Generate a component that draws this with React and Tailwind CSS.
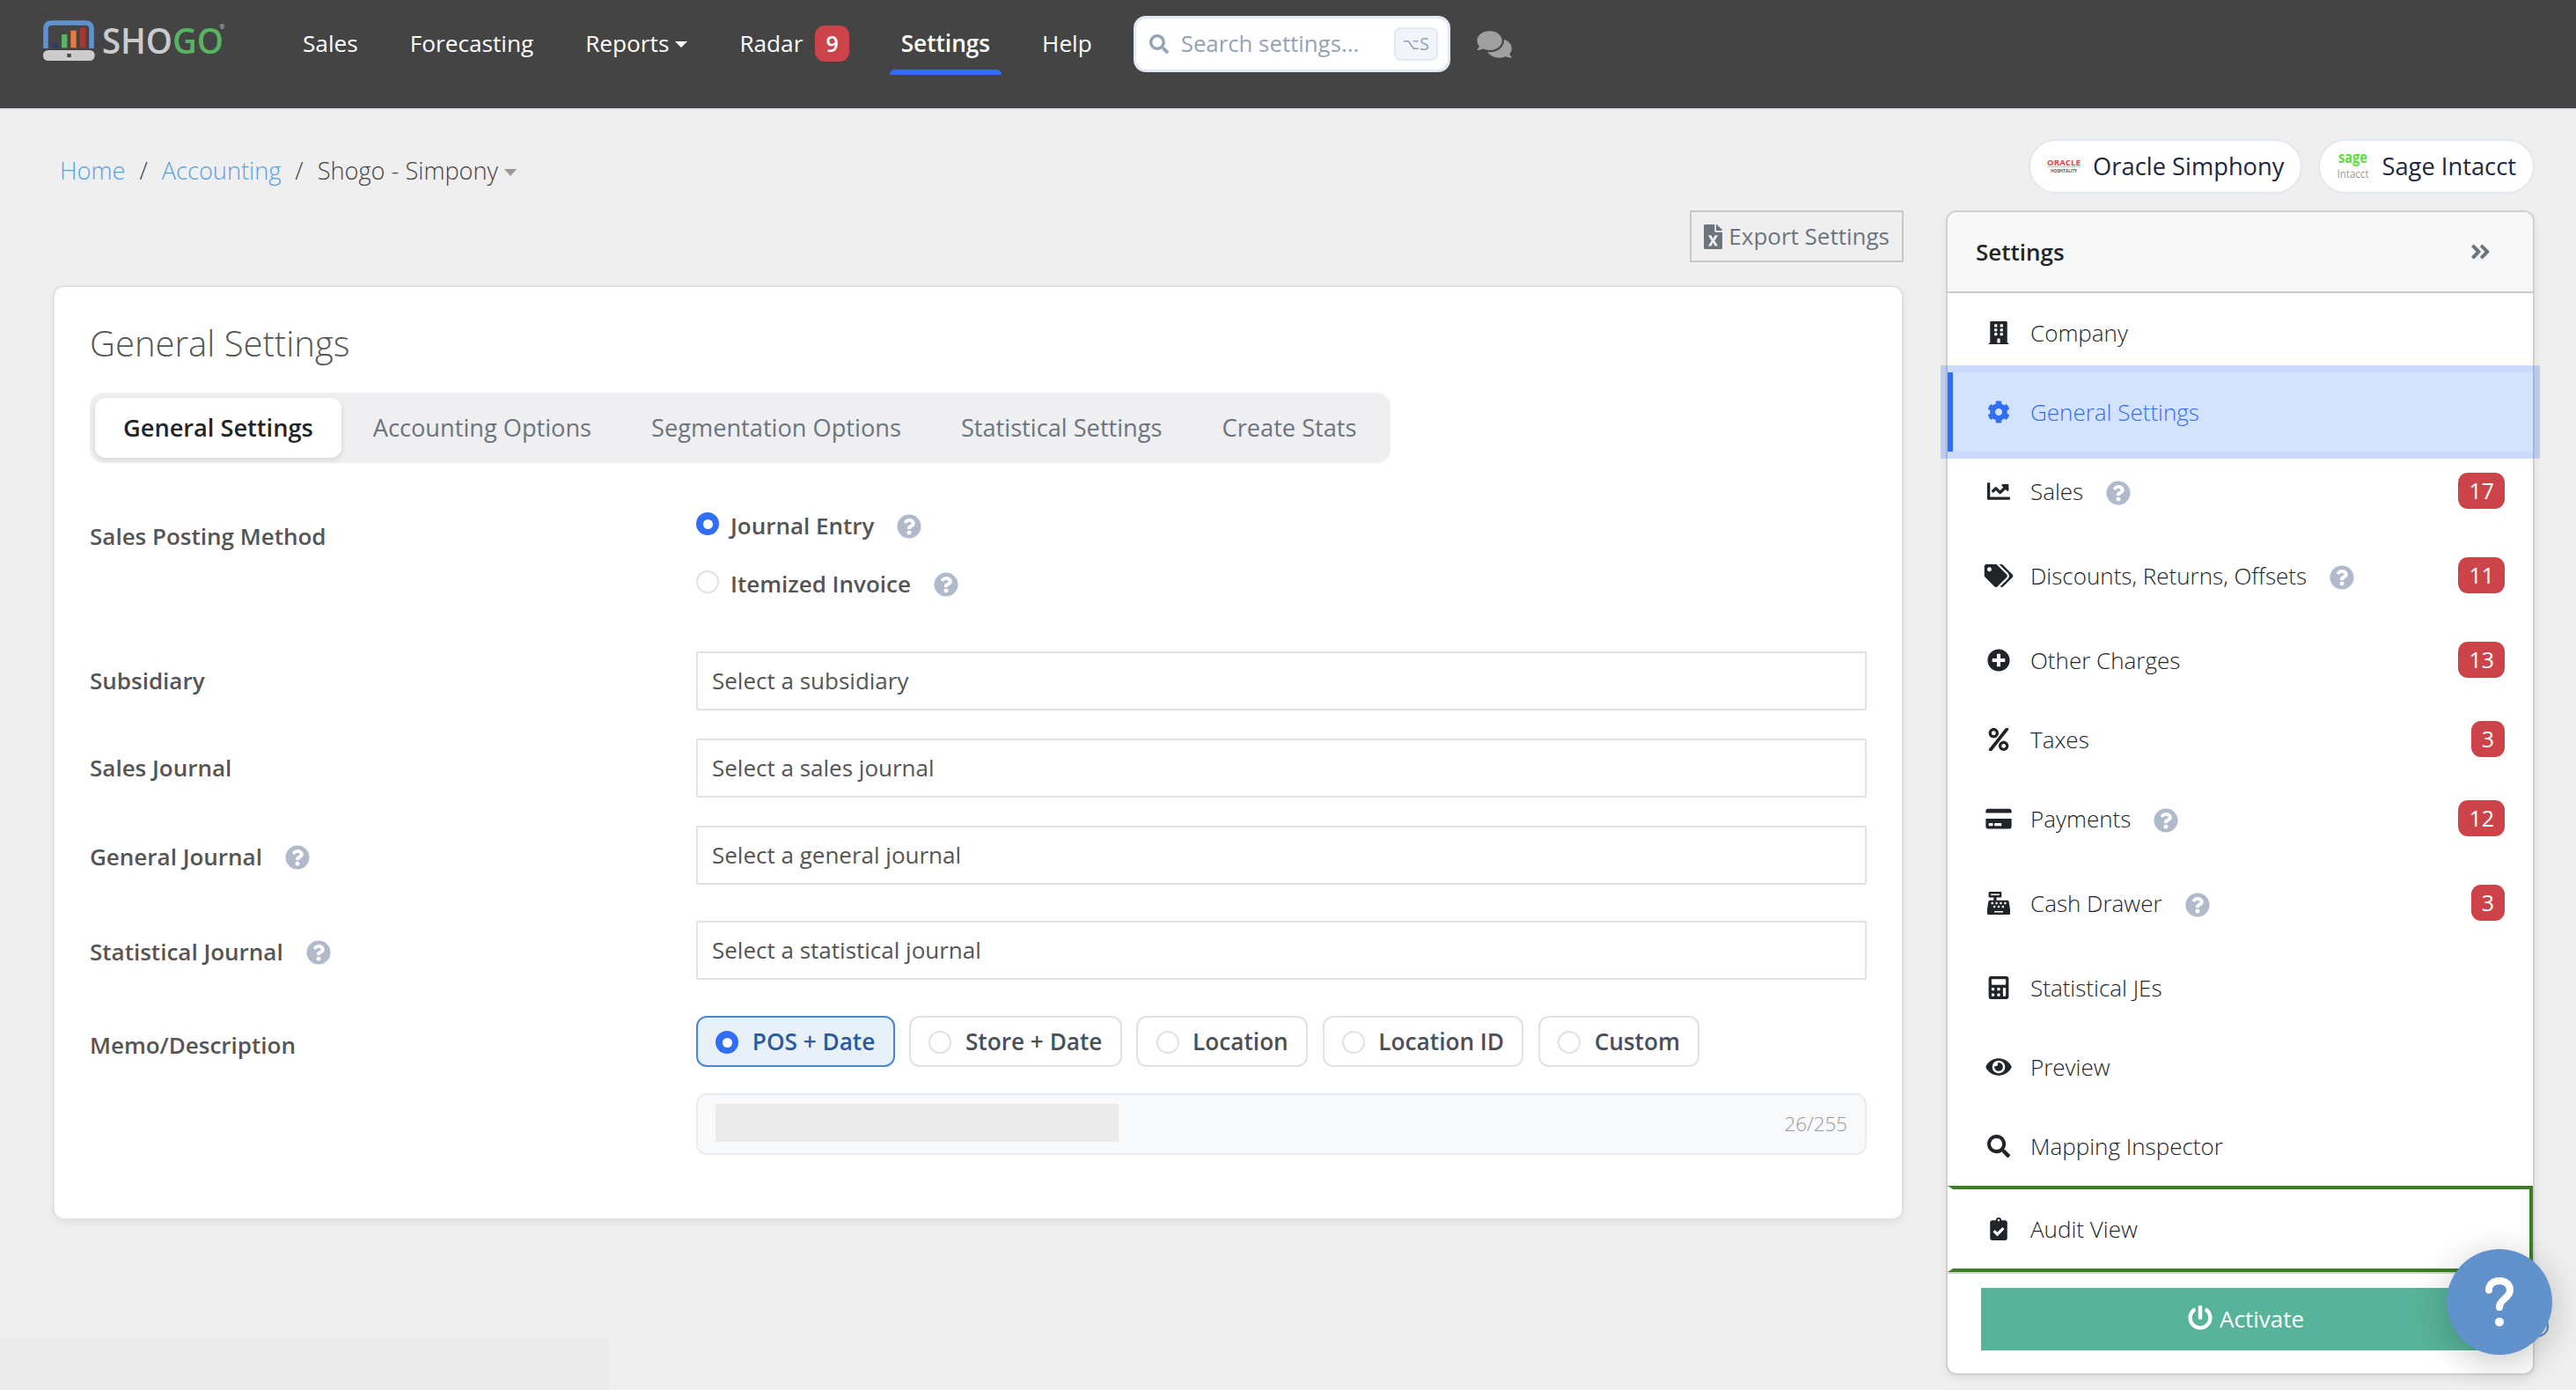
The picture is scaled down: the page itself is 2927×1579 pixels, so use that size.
import React, { useState } from 'react'
import {
  FaAngleDoubleRight,
  FaBuilding,
  FaCalculator,
  FaCashRegister,
  FaChartLine,
  FaClipboardCheck,
  FaCog,
  FaComments,
  FaCreditCard,
  FaEye,
  FaFileExcel,
  FaPercent,
  FaPlusCircle,
  FaPowerOff,
  FaQuestionCircle,
  FaSearch,
  FaTags
} from 'react-icons/fa'

const tabs = [
  'General Settings',
  'Accounting Options',
  'Segmentation Options',
  'Statistical Settings',
  'Create Stats'
]

const memoOptions = ['POS + Date', 'Store + Date', 'Location', 'Location ID', 'Custom']

const menuItems = [
  { label: 'Company', icon: FaBuilding },
  { label: 'General Settings', icon: FaCog, active: true },
  { label: 'Sales', icon: FaChartLine, help: true, count: 17 },
  { label: 'Discounts, Returns, Offsets', icon: FaTags, help: true, count: 11 },
  { label: 'Other Charges', icon: FaPlusCircle, count: 13 },
  { label: 'Taxes', icon: FaPercent, count: 3 },
  { label: 'Payments', icon: FaCreditCard, help: true, count: 12 },
  { label: 'Cash Drawer', icon: FaCashRegister, help: true, count: 3 },
  { label: 'Statistical JEs', icon: FaCalculator },
  { label: 'Preview', icon: FaEye },
  { label: 'Mapping Inspector', icon: FaSearch },
  { label: 'Audit View', icon: FaClipboardCheck, outlined: true }
]

const HelpIcon = () => (
  <FaQuestionCircle className="ml-[26px] mt-px h-[28px] w-[28px] shrink-0 text-[#b0bacb]" />
)

const Badge = ({ children, className = 'font-normal' }) => (
  <span
    className={`mb-px flex h-[41px] items-center justify-center rounded-[11px] bg-[#cc444a] px-[12px] pb-px text-[25px] leading-none text-white ${className}`}
  >
    {children}
  </span>
)

const Radio = ({ checked }) =>
  checked ? (
    <span className="flex h-[26px] w-[26px] shrink-0 items-center justify-center rounded-full bg-[#316ef6]">
      <span className="h-[11px] w-[11px] rounded-full bg-white" />
    </span>
  ) : (
    <span className="block h-[26px] w-[26px] shrink-0 rounded-full border-2 border-[#dee2e6] bg-white" />
  )

const Logo = () => (
  <svg className="h-[48px] w-[210px] shrink-0 overflow-visible" viewBox="48 21 210 48">
    <path d="M52 54V32q0-7 7-7h38q7 0 7 7v22" fill="none" stroke="#6093cd" strokeWidth="5.6" />
    <rect x="59.7" y="47.7" width="6.4" height="5.6" fill="#2f3c63" />
    <rect x="70" y="38" width="6.4" height="15.3" fill="#5ab263" />
    <rect x="80.3" y="33.7" width="6.4" height="19.6" fill="#e67c40" />
    <rect x="90.8" y="30.3" width="6.4" height="23" fill="#ad3230" />
    <rect x="49" y="56" width="58.6" height="12" rx="5.5" fill="#cbcbcb" />
    <rect x="76.3" y="60" width="4.4" height="4" fill="#444" />
    <text
      x="116"
      y="60"
      fontFamily="Open Sans, sans-serif"
      fontSize="39.5"
      fontWeight="600"
      fill="#cbcbcb"
      textLength="138"
      lengthAdjust="spacingAndGlyphs"
    >
      SHO<tspan fill="#5ab263">GO</tspan>
    </text>
    <text x="249.5" y="32" fontFamily="Open Sans, sans-serif" fontSize="7" fill="#cbcbcb">
      ®
    </text>
  </svg>
)

const NavItem = ({ children, active }) => (
  <a className={`relative flex h-[64px] items-center px-[13px] ${active ? 'font-semibold' : 'font-medium'}`}>
    {children}
    {active && (
      <span className="absolute inset-x-0 bottom-[-3px] h-[6px] rounded-t-[6px] bg-[#316ef6]" />
    )}
  </a>
)

const Header = () => (
  <header className="h-[125px] border-b-2 border-[#e2e6ec] bg-[#444]">
    <div className="flex h-[100px] items-center pl-[48px] text-[26.2px] leading-[38px] text-white">
      <div className="mb-[8px] mr-[73px]">
        <Logo />
      </div>
      <nav className="flex items-center gap-[33px]">
        <NavItem>
          <span className="mb-[2px]">Sales</span>
        </NavItem>
        <NavItem>
          <span className="mb-[2px]">Forecasting</span>
        </NavItem>
        <NavItem>
          <span className="mb-[2px]">Reports</span>
          <span className="ml-[7px] border-x-[7px] border-t-[7px] border-x-transparent border-t-white" />
        </NavItem>
        <NavItem>
          <span className="mb-[2px]">Radar</span>
          <Badge className="ml-[14px] font-semibold">9</Badge>
        </NavItem>
        <NavItem active>
          <span className="mb-[2px]">Settings</span>
        </NavItem>
        <NavItem>
          <span className="mb-[2px]">Help</span>
        </NavItem>
      </nav>
      <div className="ml-[34px] flex h-[64px] w-[360px] items-center rounded-[14px] border-[3px] border-[#e2e8f0] bg-white pl-[15px] pr-[11px] text-[25.8px] text-[#94a3b8]">
        <FaSearch className="h-[22px] w-[22px]" />
        <span className="mb-[2px] ml-[14px]">Search settings...</span>
        <kbd className="ml-auto flex h-[38px] w-[50px] items-center justify-center rounded-[8px] border-2 border-[#e2e8f0] bg-[#f1f5f9] font-['Open_Sans',sans-serif] text-[20px] leading-none">
          <span className="font-['DejaVu_Sans',sans-serif] text-[17px]">⌥</span>S
        </kbd>
      </div>
      <FaComments className="ml-[30px] h-[35px] w-[40px] text-[#a0a0a0]" />
    </div>
  </header>
)

const TopBar = () => (
  <div className="flex h-[62px] items-center justify-between">
    <div className="mt-[10px] flex items-center gap-[16px] pl-[8px] text-[27.2px] font-light leading-[38px] text-[#444]">
      <a className="text-[#56a2e4]">Home</a>
      <span>/</span>
      <a className="text-[#56a2e4]">Accounting</a>
      <span>/</span>
      <span className="flex items-center">
        Shogo - Simpony
        <span className="ml-[7px] mt-[4px] border-x-[7px] border-t-[8px] border-x-transparent border-t-[#999]" />
      </span>
    </div>
    <div className="flex gap-[18px] text-[27.3px] leading-[38px] text-[#1e293b]">
      <div className="flex h-[62px] items-center gap-[14px] rounded-full border-2 border-[#e2e8f0] bg-white px-[19px]">
        <svg className="h-[18px] w-[38px] overflow-visible" viewBox="0 0 38 18">
          <text x="0" y="7.5" fontFamily="Open Sans, sans-serif" fontSize="8.5" fontWeight="700" fill="#e8413d" textLength="38" lengthAdjust="spacingAndGlyphs">ORACLE</text>
          <rect x="0" y="9" width="38" height="1" fill="#c4c4c4" />
          <text x="4" y="16.2" fontFamily="Open Sans, sans-serif" fontSize="5.4" fontWeight="700" fill="#555" textLength="30" lengthAdjust="spacingAndGlyphs">HOSPITALITY</text>
        </svg>
        Oracle Simphony
      </div>
      <div className="flex h-[62px] items-center gap-[14px] rounded-full border-2 border-[#e2e8f0] bg-white px-[19px]">
        <svg className="h-[34px] w-[37px] overflow-visible" viewBox="0 0 37 34">
          <text x="2" y="12.5" fontFamily="Open Sans, sans-serif" fontSize="17" fontWeight="700" fill="#5edc3e" textLength="33" lengthAdjust="spacingAndGlyphs">sage</text>
          <text x="0.5" y="29.5" fontFamily="Open Sans, sans-serif" fontSize="13.5" fill="#999" textLength="36" lengthAdjust="spacingAndGlyphs">Intacct</text>
        </svg>
        Sage Intacct
      </div>
    </div>
  </div>
)

const FormRow = ({ label, help, className = '', labelClass = '', children }) => (
  <div className={`grid grid-cols-[689px_1fr] ${className}`}>
    <div className={`flex items-center text-[26px] font-semibold ${labelClass}`}>
      {label}
      {help && <HelpIcon />}
    </div>
    {children}
  </div>
)

const SelectBox = ({ placeholder }) => (
  <div className="flex h-[67px] items-center rounded-[2px] border-2 border-[#dee2e6] bg-white px-[16px] pb-px text-[26px]">
    {placeholder}
  </div>
)

const GeneralSettings = () => {
  const [tab, setTab] = useState('General Settings')
  const [method, setMethod] = useState('Journal Entry')
  const [memo, setMemo] = useState('POS + Date')

  return (
    <section className="h-[1062px] rounded-[12px] border-2 border-[#dee2e6] bg-white pl-[40px] pr-[40px] pt-[36px] text-[26px] leading-[36px] text-[#555] shadow-[0_4px_8px_rgba(0,0,0,0.05)]">
      <h1 className="text-[40px] font-light leading-[56px]">General Settings</h1>

      <div className="mt-[28px] flex h-[80px] w-fit gap-[4px] rounded-[16px] bg-[#efeff1] p-[6px] text-[27.2px]">
        {tabs.map((name) => (
          <button
            key={name}
            onClick={() => setTab(name)}
            className={
              tab === name
                ? 'rounded-[12px] bg-white px-[32px] pb-px font-semibold text-[#212529] shadow-[0_2px_6px_rgba(0,0,0,0.12)]'
                : 'px-[32px] pb-px text-[#6c757d]'
            }
          >
            {name}
          </button>
        ))}
      </div>

      <FormRow label="Sales Posting Method" className="mt-[38px]" labelClass="h-[90px]">
        <div className="font-semibold">
          {['Journal Entry', 'Itemized Invoice'].map((name) => (
            <div key={name} className="flex h-[66px] items-center" onClick={() => setMethod(name)}>
              <span className="mb-[4px] mr-[13px]">
                <Radio checked={method === name} />
              </span>
              {name}
              <HelpIcon />
            </div>
          ))}
        </div>
      </FormRow>

      <FormRow label="Subsidiary" className="mt-[44px]" labelClass="pb-px">
        <SelectBox placeholder="Select a subsidiary" />
      </FormRow>
      <FormRow label="Sales Journal" className="mt-[32px]" labelClass="pb-px">
        <SelectBox placeholder="Select a sales journal" />
      </FormRow>
      <FormRow label="General Journal" help className="mt-[32px]" labelClass="pt-[3px]">
        <SelectBox placeholder="Select a general journal" />
      </FormRow>
      <FormRow label="Statistical Journal" help className="mt-[41px]" labelClass="pt-[3px]">
        <SelectBox placeholder="Select a statistical journal" />
      </FormRow>

      <FormRow label="Memo/Description" className="mt-[41px]" labelClass="h-[66px]">
        <div>
          <div className="flex gap-[16.5px]">
            {memoOptions.map((name) => (
              <button
                key={name}
                onClick={() => setMemo(name)}
                className={
                  memo === name
                    ? 'flex h-[58px] items-center gap-[15.500px] rounded-[12px] border-2 border-[#4a86d8] bg-[#e8f0fa] px-[20.300px] text-[26.2px] font-semibold text-[#2c5aa0]'
                    : 'flex h-[58px] items-center gap-[15.500px] rounded-[12px] border-2 border-[#dee2e6] bg-white px-[20.300px] text-[26.2px] font-semibold text-[#495057]'
                }
              >
                <span className="mt-[2px]">
                  <Radio checked={memo === name} />
                </span>
                {name}
              </button>
            ))}
          </div>
          <div className="mt-[30px] flex h-[70px] items-center justify-between rounded-[12px] border-2 border-[#e9ecef] bg-[#f8f9fb] px-[20px]">
            <span className="mb-[3px] h-[43px] w-[458px] bg-[#eaeaea]" />
            <span className="text-[22.4px] font-light text-[#999]">26/255</span>
          </div>
        </div>
      </FormRow>
    </section>
  )
}

const MenuItem = ({ item }) => {
  const Icon = item.icon
  let box = 'h-[90px] border-l-transparent'
  if (item.help) box = 'h-[96px] border-l-transparent pb-[6px]'
  if (item.active) {
    box = 'relative z-10 h-[90px] border-l-[#316ef6] bg-[#d3e2fd] text-[#316ef6] shadow-[0_0_0_8px_rgba(49,110,246,0.25)]'
  }
  if (item.outlined) {
    box = 'h-[98px] border-y-4 border-r-4 border-y-[#3a8022] border-r-[#3a8022] border-l-transparent'
  }

  return (
    <a className={`flex items-center border-l-[6px] pl-[35px] pr-[32px] ${box}`}>
      <span className="mr-[19px] flex w-[34px] justify-center">
        <Icon className="h-[26px] w-[34px] shrink-0" />
      </span>
      {item.label}
      {item.help && (
        <span className="mt-[3px]">
          <HelpIcon />
        </span>
      )}
      {item.count && <Badge className="ml-auto font-normal">{item.count}</Badge>}
    </a>
  )
}

const Sidebar = () => (
  <aside className="h-[1323px] w-[669px] shrink-0 rounded-[12px] border-2 border-[#d0d0d0] bg-white text-[26px] font-light leading-[36px] text-[#212529] shadow-[0_4px_10px_rgba(0,0,0,0.07)]">
    <div className="flex h-[92px] items-center justify-between rounded-t-[10px] border-b-2 border-[#cbcbcb] bg-[#f8f8f8] pl-[32px] pr-[48px]">
      <h2 className="text-[26px] font-semibold">Settings</h2>
      <FaAngleDoubleRight className="h-[26px] w-[23px] text-[#6c757d]" />
    </div>
    {menuItems.map((item) => (
      <MenuItem key={item.label} item={item} />
    ))}
    <div className="border-t-2 border-[#d4d4d4] pl-[38px] pt-[16px]">
      <button className="flex h-[71px] w-[602px] items-center justify-center gap-[8px] bg-[#57b399] pb-px font-medium text-white">
        <FaPowerOff className="mb-[2px] h-[28px] w-[28px]" />
        Activate
      </button>
    </div>
  </aside>
)

const App = () => {
  return (
    <div className="relative h-[1579px] w-[2927px] overflow-hidden bg-[#efefef] font-['Open_Sans',sans-serif]">
      <Header />
      <main className="pl-[60px] pr-[47px] pt-[33px]">
        <TopBar />
        <div className="mt-[19px] flex items-start gap-[48px]">
          <div className="flex-1">
            <button className="ml-auto flex h-[59px] items-center gap-[7px] border-2 border-[#c8c8c8] px-[14px] text-[26px] text-[#6c757d]">
              <FaFileExcel className="h-[28px] w-[21px]" />
              Export Settings
            </button>
            <div className="mt-[26px]">
              <GeneralSettings />
            </div>
          </div>
          <Sidebar />
        </div>
      </main>

      {/* link status strip */}
      <div className="absolute bottom-0 left-0 h-[59px] w-[692px] bg-[#eaeaea] shadow-[0_0_6px_rgba(0,0,0,0.02)]" />

      {/* floating help button */}
      <span className="absolute bottom-[60px] right-[31px] h-[25px] w-[25px] rounded-full border-2 border-[#5588c6]" />
      <button className="absolute bottom-[40px] right-[27px] z-20 flex h-[120px] w-[120px] items-center justify-center rounded-full bg-[#6192cb] shadow-[0_8px_40px_rgba(0,0,0,0.22)]">
        <svg className="h-[56px] w-[32px]" viewBox="0 0 32 56" fill="none">
          <path d="M4 14.5C4 8 9 4 16.2 4 23.2 4 28 8.5 28 14.5 28 24 16 24.5 16 34" stroke="#fff" strokeWidth="8" strokeLinecap="round" />
          <circle cx="16" cy="50.7" r="5" fill="#fff" />
        </svg>
      </button>
    </div>
  )
}

export default App
